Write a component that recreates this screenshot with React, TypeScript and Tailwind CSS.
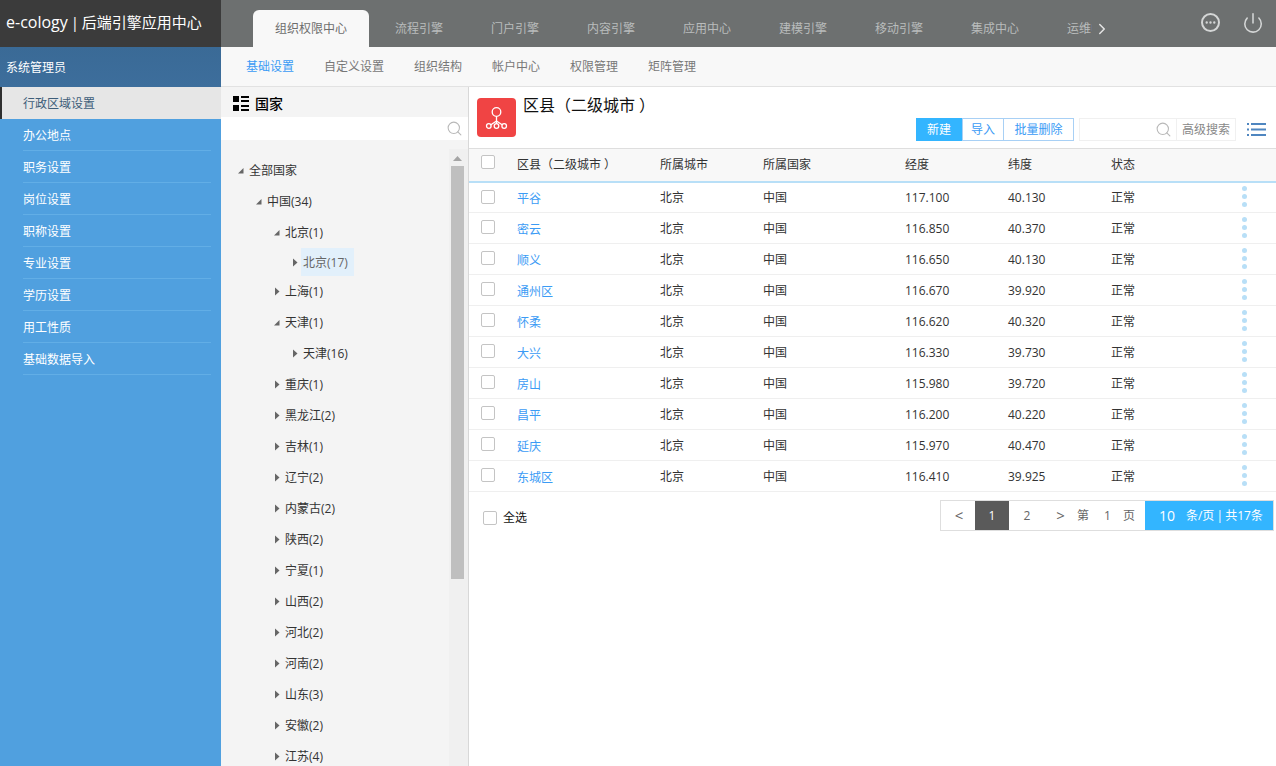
import { ChevronRight, Ellipsis, Power, Search } from "lucide-react";

const topTabs = ["流程引擎", "门户引擎", "内容引擎", "应用中心", "建模引擎", "移动引擎", "集成中心"];
const subTabs = ["自定义设置", "组织结构", "帐户中心", "权限管理", "矩阵管理"];
const menu = ["办公地点", "职务设置", "岗位设置", "职称设置", "专业设置", "学历设置", "用工性质", "基础数据导入"];

const tree: { label: string; level: number; open?: boolean; active?: boolean }[] = [
  { label: "全部国家", level: 0, open: true },
  { label: "中国(34)", level: 1, open: true },
  { label: "北京(1)", level: 2, open: true },
  { label: "北京(17)", level: 3, active: true },
  { label: "上海(1)", level: 2 },
  { label: "天津(1)", level: 2, open: true },
  { label: "天津(16)", level: 3 },
  { label: "重庆(1)", level: 2 },
  { label: "黑龙江(2)", level: 2 },
  { label: "吉林(1)", level: 2 },
  { label: "辽宁(2)", level: 2 },
  { label: "内蒙古(2)", level: 2 },
  { label: "陕西(2)", level: 2 },
  { label: "宁夏(1)", level: 2 },
  { label: "山西(2)", level: 2 },
  { label: "河北(2)", level: 2 },
  { label: "河南(2)", level: 2 },
  { label: "山东(3)", level: 2 },
  { label: "安徽(2)", level: 2 },
  { label: "江苏(4)", level: 2 },
];

const rows = [
  ["平谷", "117.100", "40.130"],
  ["密云", "116.850", "40.370"],
  ["顺义", "116.650", "40.130"],
  ["通州区", "116.670", "39.920"],
  ["怀柔", "116.620", "40.320"],
  ["大兴", "116.330", "39.730"],
  ["房山", "115.980", "39.720"],
  ["昌平", "116.200", "40.220"],
  ["延庆", "115.970", "40.470"],
  ["东城区", "116.410", "39.925"],
];

const indents = ["pl-[14px]", "pl-[32px]", "pl-[50px]", "pl-[68px]"];

function Check() {
  return <span className="block w-[14px] h-[14px] rounded-[2px] border border-[#c4c4c4] bg-white" />;
}

// closing bracket sits a bit off the text in the reference
function CityTitle() {
  return (
    <>
      区县（二级城市<span className="ml-[0.25em]">）</span>
    </>
  );
}

function TreeRow({ label, level, open, active }: (typeof tree)[number]) {
  return (
    <div className={`flex items-center ${active ? "h-[28px]" : "h-[31px]"} ${indents[level]}`}>
      <span className="w-[11px] flex justify-center">
        {open ? (
          <svg width="7" height="7" viewBox="0 0 7 7"><path d="M6.500 1v5.500H1z" fill="#666" /></svg>
        ) : (
          <svg width="6" height="9" viewBox="0 0 6 9"><path d="M1 .5l4.500 4L1 8.500z" fill="#666" /></svg>
        )}
      </span>
      <span
        className={
          active
            ? "ml-[1px] h-[28px] leading-[29px] px-[2px] bg-[#e2f0fb] text-[#666] w-[53px] whitespace-nowrap"
            : "ml-[3px] text-[#333] whitespace-nowrap"
        }
      >
        {label}
      </span>
    </div>
  );
}

function App() {
  return (
    <div
      className="w-[1276px] h-[766px] overflow-hidden flex flex-col bg-white text-[12px] text-[#333]"
      style={{ fontFamily: '"Open Sans", "Noto Sans CJK SC", sans-serif' }}
    >
      {/* top bar */}
      <header className="h-[47px] shrink-0 flex bg-[#6d7070]">
        <div className="w-[221px] bg-[#3b3b3b] pl-[6px] text-[15px] leading-[44px] text-white whitespace-nowrap [word-spacing:-1px]">
          <span className="text-[16px]">e-cology</span> | 后端引擎应用中心
        </div>
        <nav className="flex items-end pl-[32px] flex-1 text-[#b9bcbc] text-[12px]">
          <div className="w-[116px] h-[37px] rounded-t-[6px] bg-[#f8f8f8] text-[#6d6d6d] text-center leading-[38px]">组织权限中心</div>
          <ul className="flex ml-[2px]">
            {topTabs.map((t) => (
              <li key={t} className="w-[96px] h-[37px] text-center leading-[38px]">{t}</li>
            ))}
            <li className="h-[37px] flex items-center pl-[24px]">
              <span className="w-[25px] overflow-hidden whitespace-nowrap">运维中心</span>
              <ChevronRight size={18} strokeWidth={2} className="text-[#e4e4e4] ml-[1px]" />
            </li>
          </ul>
        </nav>
        <div className="flex items-start gap-[22px] pt-[12px] pr-[12px] text-[#d4d6d6]">
          <span className="w-[19px] h-[19px] mt-[1px] rounded-full border-[2px] border-[#d4d6d6] flex items-center justify-center">
            <Ellipsis size={13} strokeWidth={2.4} />
          </span>
          <Power size={22} strokeWidth={1.7} />
        </div>
      </header>

      <div className="flex-1 flex min-h-0">
        {/* left menu */}
        <aside className="w-[221px] shrink-0 bg-[#50a0df] text-white">
          <div className="h-[40px] pl-[6px] leading-[41px] bg-gradient-to-b from-[#3a6a96] to-[#3d6e9c]">系统管理员</div>
          <div className="h-[32px] pl-[21px] leading-[34px] bg-[#e6e6e6] border-l-[2px] border-[#2f2f2f] text-[#3e5e7a]">行政区域设置</div>
          <ul>
            {menu.map((m) => (
              <li key={m} className="ml-[23px] mr-[10px] h-[32px] leading-[33px] border-b border-[#62aee6]">{m}</li>
            ))}
          </ul>
        </aside>

        <div className="flex-1 min-w-0 flex flex-col">
          {/* sub tabs */}
          <div className="h-[40px] shrink-0 flex items-center pl-[25px] gap-[30px] bg-[#f8f8f8] border-b border-[#e2e2e2] text-[#777]">
            <span className="text-[#3b9bf5]">基础设置</span>
            {subTabs.map((t) => (
              <span key={t}>{t}</span>
            ))}
          </div>

          <div className="flex-1 min-h-0 flex">
            {/* tree panel */}
            <section className="w-[248px] shrink-0 bg-[#f4f4f4] border-r border-[#d8d8d8] flex flex-col">
              <div className="h-[30px] pt-[2px] shrink-0 flex items-center pl-[12px] gap-[6px] text-[14px] text-black font-medium">
                <svg width="16" height="15" viewBox="0 0 16 15" fill="#000">
                  <rect x="0" y="0" width="6" height="6" />
                  <rect x="0" y="9" width="6" height="6" />
                  <rect x="8" y="0" width="8" height="2" />
                  <rect x="8" y="4" width="8" height="2" />
                  <rect x="8" y="9" width="8" height="2" />
                  <rect x="8" y="13" width="8" height="2" />
                </svg>
                国家
              </div>
              <div className="h-[23px] shrink-0 bg-white flex items-center justify-end pr-[5px]">
                <Search size={17} strokeWidth={1.5} className="text-[#b8b8b8]" />
              </div>
              <div className="flex-1 min-h-0 flex overflow-hidden">
                <div className="flex-1 pt-[15px]">
                  {tree.map((n) => (
                    <TreeRow key={n.label + n.level} {...n} />
                  ))}
                </div>
                <div className="w-[19px] mt-[9px] shrink-0 bg-[#f0f0f0] flex flex-col pl-[2px] pt-[7px]">
                  <svg width="13" height="5" viewBox="0 0 13 5" className="shrink-0"><path d="M6.500 0L11 5H2z" fill="#a5a5a5" /></svg>
                  <div className="w-[13px] h-[413px] mt-[5px] bg-[#bfbfbf]" />
                </div>
              </div>
            </section>

            {/* table area */}
            <main className="flex-1 min-w-0">
              <div className="h-[61px] flex pl-[8px] pt-[11px]">
                <span className="w-[39px] h-[39px] rounded-[4px] bg-[#f04444] flex items-center justify-center shrink-0">
                  <svg width="24" height="26" viewBox="0 0 24 26" fill="none" stroke="#fff" strokeWidth="1.300">
                    <circle cx="11.500" cy="7" r="4.300" />
                    <path d="M11.500 11.500v7M11.500 16L5.500 20M11.500 16l6 4" />
                    <circle cx="3.800" cy="21" r="2.300" />
                    <circle cx="11.500" cy="21" r="2.300" />
                    <circle cx="19.200" cy="21" r="2.300" />
                  </svg>
                </span>
                <div className="flex-1 flex flex-col ml-[7px] min-w-0">
                  <div className="text-[16px] leading-[15px] text-[#111] whitespace-nowrap"><CityTitle /></div>
                  <div className="flex justify-end items-center mt-[5px] pr-[10px]">
                    <span className="w-[46px] h-[23px] leading-[24px] text-center bg-[#33b5ff] text-white">新建</span>
                    <span className="w-[42px] h-[23px] leading-[22px] text-center border border-[#a8d0f5] text-[#3b9bf5]">导入</span>
                    <span className="w-[70px] h-[23px] leading-[22px] text-center border border-l-0 border-[#a8d0f5] text-[#3b9bf5]">批量删除</span>
                    <div className="ml-[5px] w-[157px] h-[23px] border border-[#f0f0f0] flex items-center">
                      <span className="flex-1 flex justify-end pr-[4px]">
                        <Search size={17} strokeWidth={1.5} className="text-[#b8b8b8]" />
                      </span>
                      <span className="w-[59px] h-full leading-[22px] text-center border-l border-[#f0f0f0] text-[#888]">高级搜索</span>
                    </div>
                    <svg width="19" height="15" viewBox="0 0 19 15" fill="#4f86c0" className="ml-[11px]">
                      <rect x="0" y="1" width="2" height="2" />
                      <rect x="4" y="1" width="15" height="2" />
                      <rect x="0" y="6.500" width="2" height="2" />
                      <rect x="4" y="6.500" width="15" height="2" />
                      <rect x="0" y="12" width="2" height="2" />
                      <rect x="4" y="12" width="15" height="2" />
                    </svg>
                  </div>
                </div>
              </div>

              <table className="w-full table-fixed border-collapse">
                <colgroup>
                  <col className="w-[48px]" />
                  <col className="w-[143px]" />
                  <col className="w-[103px]" />
                  <col className="w-[142px]" />
                  <col className="w-[103px]" />
                  <col className="w-[103px]" />
                  <col className="w-[127px]" />
                  <col />
                </colgroup>
                <thead>
                  <tr className="h-[33px] bg-[#f8f8f8] border-t border-[#dedede] border-b-[2px] border-b-[#b8dff7] text-left font-normal">
                    <th className="pl-[12px] align-top pt-[6px]"><Check /></th>
                    <th className="font-normal whitespace-nowrap"><CityTitle /></th>
                    <th className="font-normal">所属城市</th>
                    <th className="font-normal">所属国家</th>
                    <th className="font-normal">经度</th>
                    <th className="font-normal">纬度</th>
                    <th className="font-normal">状态</th>
                    <th />
                  </tr>
                </thead>
                <tbody>
                  {rows.map(([name, lng, lat]) => (
                    <tr key={name} className="h-[31px] border-b border-[#efefef]">
                      <td className="pl-[12px] align-top pt-[7px]"><Check /></td>
                      <td className="text-[#3b9bf5] pt-[4px]">{name}</td>
                      <td className="pt-[2px]">北京</td>
                      <td className="pt-[2px]">中国</td>
                      <td className="pt-[2px]">{lng}</td>
                      <td className="pt-[2px]">{lat}</td>
                      <td className="pt-[2px]">正常</td>
                      <td>
                        <div className="flex flex-col items-start pl-[4px] gap-[3px] mb-[1px]">
                          <span className="w-[5px] h-[5px] rounded-full bg-[#b8dff7]" />
                          <span className="w-[5px] h-[5px] rounded-full bg-[#b8dff7]" />
                          <span className="w-[5px] h-[5px] rounded-full bg-[#b8dff7]" />
                        </div>
                      </td>
                    </tr>
                  ))}
                </tbody>
              </table>

              <div className="flex justify-between items-start pt-[8px] pr-[2px]">
                <label className="flex items-center gap-[6px] ml-[14px] mt-[9px] text-[#111]">
                  <Check />
                  全选
                </label>
                <div className="w-[334px] h-[31px] flex border border-[#dedede] text-[#666]">
                  <span className="w-[22px] ml-[7px] flex items-center justify-center text-[15px]">&lt;</span>
                  <span className="w-[34px] ml-[5px] bg-[#5a5a5a] text-white flex items-center justify-center">1</span>
                  <span className="w-[36px] flex items-center justify-center">2</span>
                  <span className="w-[15px] ml-[8px] flex items-center justify-center text-[15px]">&gt;</span>
                  <span className="ml-[9px] flex items-center">第</span>
                  <span className="ml-[15px] flex items-center">1</span>
                  <span className="ml-[12px] flex items-center">页</span>
                  <span className="ml-[10px] flex-1 bg-[#33b5ff] text-white flex items-center pl-[14px] whitespace-nowrap">
                    <span className="text-[14px]">10</span>
                    <span className="ml-[11px] [word-spacing:-1px]">条/页 | 共17条</span>
                  </span>
                </div>
              </div>
            </main>
          </div>
        </div>
      </div>
    </div>
  );
}

export default App;
